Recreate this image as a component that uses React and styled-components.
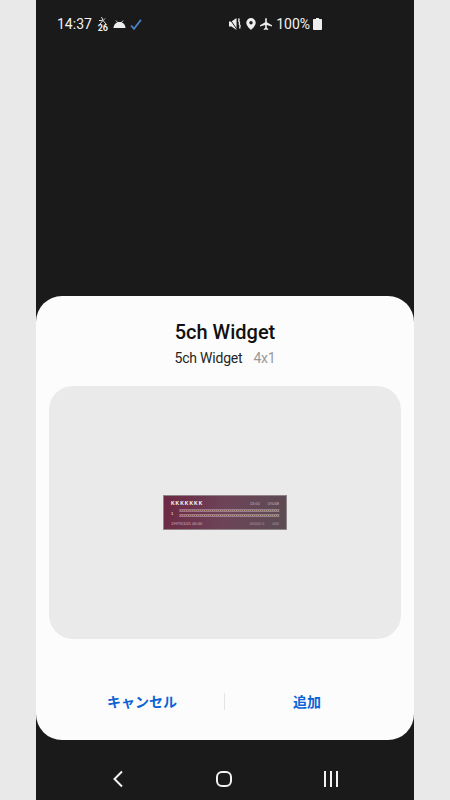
import React from "react";
import styled, { createGlobalStyle } from "styled-components";

const GlobalStyle = createGlobalStyle`
    html, body {
        margin: 0;
        padding: 0;
        background: #e9e9e9;
    }
    body {
        font-family: Roboto, "Noto Sans CJK JP", sans-serif;
    }
`

function App() {
    return <Page>
        <GlobalStyle />
        <Phone>
            <StatusBar>
                <StatusGroup>
                    <Clock>14:37</Clock>
                    <TempIcon>
                        <svg width="11" height="7" viewBox="0 0 11 7" fill="none" stroke="#ddd" strokeWidth="1">
                            <path d="M4.500 0l1.500 3.500L3 7M6 3.500L9 7M6 3.500l2-2M2 3.500h3" />
                        </svg>
                        <TempText>26</TempText>
                    </TempIcon>
                    <svg width="13" height="8" viewBox="0 0 13 8" fill="#eee">
                        <path d="M0.500 8C0.700 4.600 3 2 6.500 2s5.800 2.600 6 6z" />
                        <path d="M3 .5l1.800 2.300M10 .5L8.200 2.800" stroke="#eee" strokeWidth="0.8" />
                    </svg>
                    <svg width="12" height="11" viewBox="0 0 12 11" fill="none" stroke="#4a83c9" strokeWidth="1.800">
                        <path d="M1 6.500L4 9.800 11 .8" />
                    </svg>
                </StatusGroup>
                <StatusRight>
                    <svg width="13" height="12" viewBox="0 0 13 12" fill="#eee">
                        <path d="M0 3.500h2.500L7.500 0v12L2.500 8.500H0z" />
                        <path d="M.5 .5L8 11.500" stroke="#1a1a1a" strokeWidth="1" />
                        <path d="M9.500 .5c1.800 1.400-.8 2 .6 3.200s-.8 1.900.6 3.200-.8 1.900.4 3.600" fill="none" stroke="#eee" strokeWidth="1.300" />
                    </svg>
                    <svg width="10" height="12" viewBox="0 0 10 12">
                        <path fillRule="evenodd" fill="#eee" d="M5 0a4.700 4.700 0 0 1 4.700 4.700C9.700 8 5 12 5 12S.3 8 .3 4.700A4.700 4.700 0 0 1 5 0zm0 3a1.700 1.700 0 1 0 0 3.400A1.700 1.700 0 0 0 5 3z" />
                    </svg>
                    <svg width="12" height="12" viewBox="0 0 12 12" fill="#eee">
                        <path d="M5.200 1c0-.6.3-1 .8-1s.8.400.8 1v3.200L12 7.300v1.200L6.800 6.900v2.900l1.400 1.100V12L6 11.400 3.800 12v-1.100l1.400-1.100V6.900L0 8.500V7.300l5.200-3.100z" />
                    </svg>
                    <Battery>100%</Battery>
                    <svg width="9" height="12" viewBox="0 0 9 12" fill="#eee">
                        <path d="M3 0h3v1h2c.5 0 1 .4 1 1v9c0 .6-.5 1-1 1H1c-.5 0-1-.4-1-1V2c0-.6.5-1 1-1h2z" />
                    </svg>
                </StatusRight>
            </StatusBar>
            <Sheet>
                <Title>5ch Widget</Title>
                <SubRow>
                    <SubName>5ch Widget</SubName>
                    <SubSize>4x1</SubSize>
                </SubRow>
                <Preview>
                    <WidgetCard>
                        <WidgetTop>
                            <WidgetName>KKKKKKK</WidgetName>
                            <WidgetMeta>
                                <span>13:00</span>
                                <span>0%/48</span>
                            </WidgetMeta>
                        </WidgetTop>
                        <WidgetBody>
                            <WidgetNum>1</WidgetNum>
                            <WidgetLines>
                                <Line>XXXXXXXXXXXXXXXXXXXXXXXXXXXXXXXXXXXXXXXXXXXXXXXXXX</Line>
                                <Line>XXXXXXXXXXXXXXXXXXXXXXXXXXXXXXXXXXXXXXXXXXXXXXXXXX</Line>
                            </WidgetLines>
                        </WidgetBody>
                        <WidgetBottom>
                            <span>1997/01/01 00:00</span>
                            <WidgetMeta>
                                <span>00000 0</span>
                                <span>000</span>
                            </WidgetMeta>
                        </WidgetBottom>
                    </WidgetCard>
                </Preview>
                <Actions>
                    <ActionBtn>キャンセル</ActionBtn>
                    <Divider />
                    <ActionBtn>追加</ActionBtn>
                </Actions>
            </Sheet>
            <NavBar>
                <NavSlot>
                    <svg width="12" height="18" viewBox="0 0 12 18" fill="none" stroke="#f2f2f2" strokeWidth="2">
                        <path d="M10 1.500L2.500 9l7.500 7.500" />
                    </svg>
                </NavSlot>
                <NavSlot>
                    <HomeKey />
                </NavSlot>
                <NavSlot>
                    <svg width="16" height="16" viewBox="0 0 16 16" fill="#f2f2f2">
                        <rect x="1" y="0" width="2" height="16" />
                        <rect x="7" y="0" width="2" height="16" />
                        <rect x="13" y="0" width="2" height="16" />
                    </svg>
                </NavSlot>
            </NavBar>
        </Phone>
    </Page>
}

export default App

const Page = styled.div`
    width: 450px;
    height: 800px;
    display: flex;
    justify-content: center;
    overflow: hidden;
    background: #e9e9e9;
`
const Phone = styled.div`
    width: 378px;
    height: 800px;
    display: flex;
    flex-direction: column;
    background: #1a1a1a;
`
const StatusBar = styled.div`
    height: 48px;
    flex: none;
    box-sizing: border-box;
    padding: 0 92px 0 21px;
    display: flex;
    align-items: center;
    justify-content: space-between;
    margin-bottom: auto;
`
const StatusGroup = styled.div`
    display: flex;
    align-items: center;
    gap: 4px;
`
const StatusRight = styled.div`
    display: flex;
    align-items: center;
    gap: 4px;
`
const Clock = styled.span`
    color: #f2f2f2;
    font-size: 14px;
    margin-right: 1px;
`
const TempIcon = styled.div`
    display: flex;
    flex-direction: column;
    align-items: center;
    width: 12px;
`
const TempText = styled.span`
    color: #eee;
    font-size: 9px;
    font-weight: 700;
    line-height: 8px;
`
const Battery = styled.span`
    color: #f2f2f2;
    font-size: 14px;
    margin-right: -1px;
`
const Sheet = styled.div`
    height: 444px;
    flex: none;
    box-sizing: border-box;
    background: #fcfcfc;
    border-radius: 26px;
    padding: 24px 13px 0;
    display: flex;
    flex-direction: column;
    align-items: center;
`
const Title = styled.div`
    font-size: 20px;
    font-weight: 500;
    line-height: 24px;
    color: #101010;
`
const SubRow = styled.div`
    display: flex;
    gap: 11px;
    margin-top: 5px;
    font-size: 14px;
    line-height: 18px;
    letter-spacing: -0.2px;
`
const SubName = styled.span`
    color: #252525;
`
const SubSize = styled.span`
    color: #999;
`
const Preview = styled.div`
    width: 352px;
    height: 253px;
    flex: none;
    margin-top: 19px;
    border-radius: 24px;
    background: #eaeaea;
    display: flex;
    align-items: center;
    justify-content: center;
`
const WidgetCard = styled.div`
    width: 124px;
    height: 35px;
    box-sizing: border-box;
    padding: 5px 7px 3px;
    display: flex;
    flex-direction: column;
    justify-content: space-between;
    background: linear-gradient(100deg, #6c2843 0%, #6d4458 50%, #5b4c53 100%);
    border: 1px solid #8f8487;
    color: #e8dde0;
    font-family: "Liberation Sans", sans-serif;
    font-size: 4px;
    line-height: 5px;
    overflow: hidden;
`
const WidgetTop = styled.div`
    display: flex;
    align-items: center;
    justify-content: space-between;
`
const WidgetName = styled.span`
    font-size: 5px;
    letter-spacing: 1px;
    font-weight: 700;
    color: #fff;
`
const WidgetMeta = styled.div`
    display: flex;
    gap: 8px;
    opacity: 0.7;
`
const WidgetBody = styled.div`
    display: flex;
    align-items: center;
    gap: 6px;
`
const WidgetNum = styled.span`
    color: #fff;
`
const WidgetLines = styled.div`
    display: flex;
    flex-direction: column;
    min-width: 0;
`
const Line = styled.div`
    font-size: 3px;
    line-height: 5px;
    white-space: nowrap;
    color: #f0eaec;
`
const WidgetBottom = styled.div`
    display: flex;
    align-items: center;
    justify-content: space-between;
    opacity: 0.75;
`
const Actions = styled.div`
    width: 100%;
    box-sizing: border-box;
    margin-top: 44px;
    padding: 0 12px 0 11px;
    height: 36px;
    display: flex;
    align-items: center;
`
const ActionBtn = styled.div`
    flex: 1;
    text-align: center;
    font-size: 14px;
    font-weight: 700;
    color: #0b62d6;
    font-family: "Noto Sans CJK JP", sans-serif;
`
const Divider = styled.div`
    width: 1px;
    height: 17px;
    background: #e4e4e4;
`
const NavBar = styled.div`
    height: 60px;
    flex: none;
    display: flex;
    align-items: center;
    justify-content: space-between;
    padding: 18px 67px 0 66px;
    box-sizing: border-box;
`
const NavSlot = styled.div`
    width: 32px;
    display: flex;
    justify-content: center;
`
const HomeKey = styled.div`
    width: 16px;
    height: 16px;
    margin-right: 2px;
    box-sizing: border-box;
    border: 2px solid #f2f2f2;
    border-radius: 6px;
`
